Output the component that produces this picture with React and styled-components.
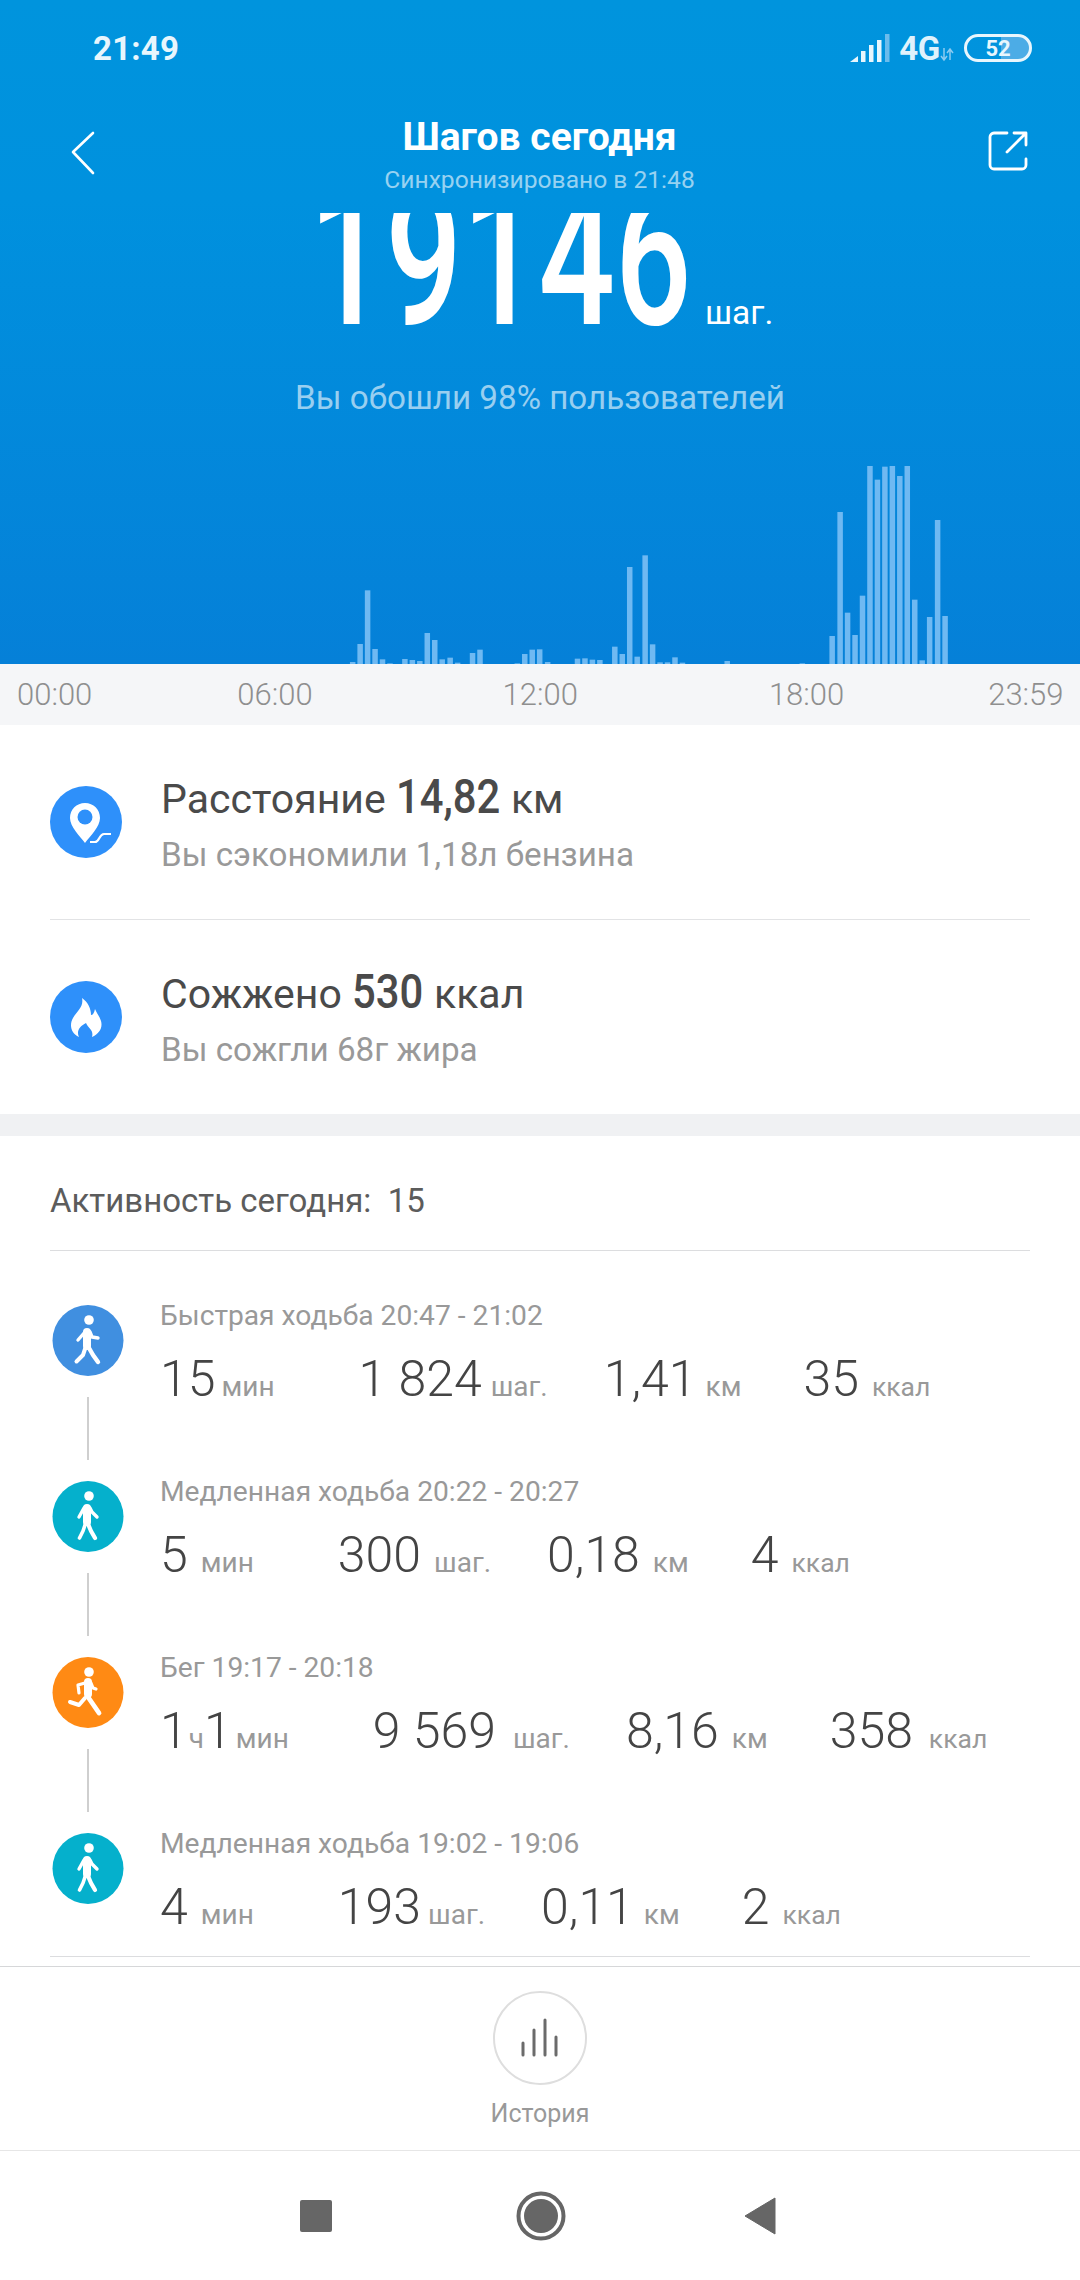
import React from "react";
import styled, { createGlobalStyle } from "styled-components";

const Global = createGlobalStyle`
  html, body { margin: 0; padding: 0; background: #fff; }
  body { font-family: Roboto, "Noto Sans", sans-serif; }
  * { box-sizing: border-box; }
`;

const Page = styled.div`
  width: 1080px; height: 2280px; overflow: hidden; background: #fff;
  display: flex; flex-direction: column;
`;
const Hero = styled.header`
  height: 664px; display: flex; flex-direction: column; color: #fff;
  background: linear-gradient(180deg, #0094dd 0%, #0091de 30%, #0580d8 100%);
`;
const StatusBar = styled.div`
  height: 96px; display: flex; align-items: center; justify-content: space-between;
  padding: 0 48px 0 93px;
`;
const Clock = styled.span`
  font-size: 33px; font-weight: 700; color: #e8f6fd; letter-spacing: .2px;
`;
const StatusRight = styled.div`
  display: flex; align-items: center;
`;
const NetLabel = styled.span`
  font-size: 33px; font-weight: 700; color: #dff2fc; margin-left: 7px; letter-spacing: -.3px;
`;
const ArrowsIcon = styled.svg`
  display: block; margin-top: 14px;
`;
const Battery = styled.div`
  width: 68px; height: 28px; margin-left: 10px; border: 3px solid #e8f6fd; border-radius: 14px;
  display: flex; align-items: center; justify-content: center; overflow: hidden;
  font-size: 22px; font-weight: 700; color: #e8f6fd;
  background: linear-gradient(90deg, transparent 0 55%, #4cace6 55% 100%);
`;
const NavBar = styled.div`
  height: 117px; display: flex; justify-content: space-between; padding: 35px 52px 0 70px;
`;
const TitleBlock = styled.div`
  display: flex; flex-direction: column; align-items: center; margin: -17px 5px 0 0;
`;
const Title = styled.div`
  font-size: 39px; line-height: 46px; font-weight: 700; white-space: nowrap;
`;
const Subtitle = styled.div`
  font-size: 24.6px; line-height: 30px; color: rgba(255,255,255,.6); white-space: nowrap; margin-top: 5px;
`;
const NumberClip = styled.div`
  height: 130px; overflow: hidden; display: flex; padding-left: 309px; align-items: baseline;
`;
const BigDigits = styled.div`
  width: 374px; flex: none; font-size: 195px; font-weight: 500; line-height: 89px; white-space: nowrap;
  transform-origin: 0 0; transform: scaleX(.69);
`;
const BigUnit = styled.div`
  font-size: 33.5px; line-height: 40px; margin-left: 22px;
`;
const Beat = styled.div`
  text-align: center; font-size: 33.2px; line-height: 40px; color: rgba(255,255,255,.6); margin-top: 35px;
`;
const ChartSvg = styled.svg`
  display: block; margin-top: auto; width: 1080px; height: 198px; flex: none;
`;
const TimeAxis = styled.div`
  height: 61px; background: #f5f6f8; display: flex; align-items: center;
  padding-left: 17px; font-size: 31px; font-weight: 300; color: #8f8f8f;
  span:nth-child(2) { margin-left: 145px; }
  span:nth-child(3) { margin-left: 190px; }
  span:nth-child(4) { margin-left: 191px; }
  span:nth-child(5) { margin-left: 144px; }
`;
const Summary = styled.section`
  padding: 0 50px;
`;
const SummaryRow = styled.div`
  height: ${p => p.$h}px; display: flex; align-items: center;
  border-bottom: ${p => (p.$line ? "1px solid #e2e3e5" : "none")};
`;
const RoundIcon = styled.svg`
  width: 72px; height: 72px; flex: none; display: block;
`;
const SummaryText = styled.div`
  margin-left: 39px; margin-top: 2px;
`;
const SummaryTitle = styled.div`
  font-size: 41px; line-height: 50px; color: #4a4a4a; white-space: nowrap;
`;
const SummaryValue = styled.span`
  display: inline-block; font-size: 48px; font-weight: 480; transform-origin: 0 50%;
  transform: scaleX(.87); margin-right: ${p => p.$trim}px;
`;
const SummarySub = styled.div`
  font-size: 33.2px; line-height: 40px; color: #999; margin-top: 11px; white-space: nowrap;
`;
const Band = styled.div`
  height: 22px; background: #f0f1f3;
`;
const ActivityHead = styled.div`
  margin: 0 50px; height: 115px; border-bottom: 1px solid #dcdddf; display: flex; align-items: center;
  font-size: 33px; color: #5c5c5c; white-space: pre; padding-top: 15px;
`;
const List = styled.div`
  padding-top: 54px; margin: 0 50px; height: 706px; border-bottom: 1px solid #dcdddf;
`;
const ActivityRow = styled.div`
  height: 176px; display: flex; padding-left: 2px;
`;
const IconCol = styled.div`
  width: 72px; flex: none; display: flex; flex-direction: column; align-items: center;
`;
const Connector = styled.div`
  width: 2px; height: 63px; background: #cfcfcf; margin-top: 20px;
`;
const ActivityBody = styled.div`
  margin-left: 36px; min-width: 0;
`;
const ActivityTitle = styled.div`
  font-size: 28.2px; line-height: 32px; color: #999; white-space: nowrap; margin-top: -5px;
`;
const Stats = styled.div`
  display: flex; align-items: baseline; margin-top: 16px; white-space: nowrap;
`;
const Stat = styled.div`
  display: flex; align-items: baseline;
  &:nth-child(2) { margin-left: 84px; }
  &:nth-child(3) { margin-left: 56px; }
  &:nth-child(4) { margin-left: 62px; }
`;
const Num = styled.span`
  font-size: 50px; line-height: 62px; font-weight: 300; color: #444; margin-right: ${p => p.$pull || 0}px;
`;
const Unit = styled.span`
  font-size: ${p => (p.$small ? 26.5 : 28)}px; color: #999; margin-left: 13px;
`;
const BottomBar = styled.div`
  margin-top: 9px; height: 185px; border-top: 1px solid #d6d7d9; border-bottom: 1px solid #e6e6e6;
  display: flex; flex-direction: column; align-items: center; padding-top: 24px;
`;
const HistoryBtn = styled.div`
  width: 94px; height: 94px; border: 2px solid #dedede; border-radius: 50%;
  display: flex; align-items: center; justify-content: center;
`;
const HistoryLabel = styled.div`
  font-size: 25px; line-height: 30px; color: #999; margin-top: 14px;
`;
const SysNav = styled.nav`
  flex: 1; display: flex; align-items: center; padding-left: 299px;
`;
const NavIcon = styled.svg`
  display: block; flex: none; margin-right: ${p => p.$mr}px;
`;

const bars = [[106,666],[121,612],[136,451],[151,627],[166,658],[181,670],[211,657],[226,660],[241,663],[256,579],[271,600],[286,658],[302,653],[317,668],[347,639],[362,629],[437,670],[452,642],[467,629],[482,628],[498,666],[558,656],[573,655],[588,659],[603,660],[633,620],[648,642],[663,381],[678,650],[694,346],[709,613],[724,667],[739,667],[754,652],[769,668],[859,663],[1010,670],[1070,588],[1086,216],[1101,518],[1116,585],[1131,467],[1146,78],[1161,119],[1176,80],[1191,78],[1206,108],[1221,78],[1236,479],[1251,661],[1266,531],[1282,240],[1297,528]];

const BLUE = "#2e90fa";
const Pin = () => (
  <RoundIcon viewBox="0 0 72 72">
    <circle cx="36" cy="36" r="36" fill={BLUE} />
    <path d="M35 17C26.5 17 20 23.5 20 32C20 41 30 50 35 57C40 50 50 41 50 32C50 23.5 43.5 17 35 17Z" fill="#fff" />
    <circle cx="35" cy="31" r="7.5" fill={BLUE} />
    <path d="M40 56h5c4.500 0 4-8 9-8h7" fill="none" stroke={BLUE} strokeWidth="5" />
    <path d="M40 56h5c4.500 0 4-8 9-8h7" fill="none" stroke="#fff" strokeWidth="2.200" />
  </RoundIcon>
);
const Flame = () => (
  <RoundIcon viewBox="0 0 72 72">
    <circle cx="36" cy="36" r="36" fill={BLUE} />
    <path d="M32 17C34 26 27 30 23 37C19 44 21 52 29 56C26 50 30 45 36 42C38 47 44 49 42 56C49 53 53 47 51 40C49 34 47 33 45 28C44 32 43 34 41 34C41 28 38 21 32 17Z" fill="#fff" />
  </RoundIcon>
);
const Figure = ({ color, kind }) => (
  <RoundIcon viewBox="0 0 72 72">
    <circle cx="36" cy="35.500" r="35.500" fill={color} />
    <g fill="none" stroke="#fff" strokeLinecap="round" strokeLinejoin="round">
      <circle cx="37" cy="15" r="4.800" fill="#fff" stroke="none" />
      {kind === "fast" && <>
        <path d="M35 27V41" strokeWidth="8" />
        <path d="M33 27L26 35M38 27L40 32L46 33" strokeWidth="3.400" />
        <path d="M33 44L31 50L24.500 56.500" strokeWidth="4" />
        <path d="M37 43L41 50L46 57" strokeWidth="4.400" />
      </>}
      {kind === "slow" && <>
        <path d="M35 27V41" strokeWidth="8" />
        <path d="M32 27L27 36M38 27L40 31L45 36" strokeWidth="3.400" />
        <path d="M33 44L31 50L27.500 57" strokeWidth="3.600" />
        <path d="M36 43L39 50L43 57" strokeWidth="4.200" />
      </>}
      {kind === "run" && <>
        <path d="M36 25V37" strokeWidth="8" />
        <path d="M33 26L26 28L27 36M39 26L41 31L44 32" strokeWidth="3.200" />
        <path d="M36 40L47 56" strokeWidth="4.800" />
        <path d="M33 41L27 48L18 45" strokeWidth="4" />
      </>}
    </g>
  </RoundIcon>
);

const rows = [
  { t: "Быстрая ходьба 20:47 - 21:02", c: "#408fe0", k: "fast", s: [[["15", "мин", -7]], [["1 824", "шаг.", -4]], [["1,41", "км", -4]], [["35", "ккал"]]] },
  { t: "Медленная ходьба 20:22 - 20:27", c: "#05b0cc", k: "slow", s: [[["5", "мин"]], [["300", "шаг."]], [["0,18", "км"]], [["4", "ккал"]]] },
  { t: "Бег 19:17 - 20:18", c: "#ff8a14", k: "run", s: [[["1", "ч", -12], ["1", "мин", -9]], [["9 569", "шаг.", 4]], [["8,16", "км"]], [["358", "ккал", 3]]] },
  { t: "Медленная ходьба 19:02 - 19:06", c: "#05b0cc", k: "slow", s: [[["4", "мин"]], [["193", "шаг.", -6]], [["0,11", "км", -3]], [["2", "ккал"]]] },
];

export default function App() {
  return (
    <Page>
      <Global />
      <Hero>
        <StatusBar>
          <Clock>21:49</Clock>
          <StatusRight>
            <svg width="42" height="30" viewBox="0 0 42 30">
              <path d="M0 29L8 23V29Z" fill="#e8f6fd" />
              <rect x="11" y="18" width="4.500" height="11" fill="#e8f6fd" />
              <rect x="19" y="12" width="4.500" height="17" fill="#e8f6fd" />
              <rect x="27" y="7" width="4.500" height="22" fill="#e8f6fd" />
              <rect x="35" y="1" width="4.500" height="28" fill="#6cbcec" />
            </svg>
            <NetLabel>4G</NetLabel>
            <ArrowsIcon width="14" height="14" viewBox="0 0 14 14">
              <path d="M4 0V12M1 8L4 12L7 8M10 12V1M7 5L10 1L13 5" fill="none" stroke="#8ccbf0" strokeWidth="1.500" />
            </ArrowsIcon>
            <Battery>52</Battery>
          </StatusRight>
        </StatusBar>
        <NavBar>
          <svg width="26" height="44" viewBox="0 0 26 44">
            <path d="M23 2L3 21L23 42" fill="none" stroke="#fff" strokeWidth="2.600" strokeLinecap="round" strokeLinejoin="round" />
          </svg>
          <TitleBlock>
            <Title>Шагов сегодня</Title>
            <Subtitle>Синхронизировано в 21:48</Subtitle>
          </TitleBlock>
          <svg width="40" height="40" viewBox="0 0 40 40">
            <path d="M19 2H6a4 4 0 0 0-4 4V34a4 4 0 0 0 4 4H34a4 4 0 0 0 4-4V28M19 21L37 3M26 2H38V14" fill="none" stroke="#fff" strokeWidth="2.800" strokeLinecap="round" strokeLinejoin="round" />
          </svg>
        </NavBar>
        <NumberClip>
          <BigDigits>19146</BigDigits>
          <BigUnit>шаг.</BigUnit>
        </NumberClip>
        <Beat>Вы обошли 98% пользователей</Beat>
        <ChartSvg viewBox="0 0 1080 198">
          {bars.map(([x, y]) => (
            <rect key={x} x={300 + x * 0.4974 - 2.8} y={(y - 78) / 3} width="5.500" height={(672 - y) / 3} fill="#6fb9f2" />
          ))}
        </ChartSvg>
      </Hero>
      <TimeAxis>
        <span>00:00</span><span>06:00</span><span>12:00</span><span>18:00</span><span>23:59</span>
      </TimeAxis>
      <Summary>
        <SummaryRow $h={195} $line>
          <Pin />
          <SummaryText>
            <SummaryTitle>Расстояние <SummaryValue $trim={-15}>14,82</SummaryValue> км</SummaryTitle>
            <SummarySub>Вы сэкономили 1,18л бензина</SummarySub>
          </SummaryText>
        </SummaryRow>
        <SummaryRow $h={194}>
          <Flame />
          <SummaryText>
            <SummaryTitle>Сожжено <SummaryValue $trim={-10}>530</SummaryValue> ккал</SummaryTitle>
            <SummarySub>Вы сожгли 68г жира</SummarySub>
          </SummaryText>
        </SummaryRow>
      </Summary>
      <Band />
      <ActivityHead>{"Активность сегодня:  15"}</ActivityHead>
      <List>
        {rows.map((r, i) => (
          <ActivityRow key={i}>
            <IconCol>
              <Figure color={r.c} kind={r.k} />
              {i < rows.length - 1 && <Connector />}
            </IconCol>
            <ActivityBody>
              <ActivityTitle>{r.t}</ActivityTitle>
              <Stats>
                {r.s.map((st, j) => (
                  <Stat key={j}>
                    {st.map(([n, u, pull], m) => (
                      <React.Fragment key={m}>
                        <Num $pull={pull}>{n}</Num>
                        <Unit $small={u === "ккал"}>{u}</Unit>
                      </React.Fragment>
                    ))}
                  </Stat>
                ))}
              </Stats>
            </ActivityBody>
          </ActivityRow>
        ))}
      </List>
      <BottomBar>
        <HistoryBtn>
          <svg width="40" height="40" viewBox="0 0 40 40">
            <path d="M3 37V25M14 37V12M25 37V2M36 37V19" stroke="#6b6b6b" strokeWidth="3" strokeLinecap="round" />
          </svg>
        </HistoryBtn>
        <HistoryLabel>История</HistoryLabel>
      </BottomBar>
      <SysNav>
        <NavIcon width="34" height="34" viewBox="0 0 34 34" $mr={183}>
          <rect x="1" y="1" width="32" height="32" rx="2" fill="#666" />
        </NavIcon>
        <NavIcon width="50" height="50" viewBox="0 0 50 50" $mr={178}>
          <circle cx="25" cy="25" r="22.500" fill="none" stroke="#666" strokeWidth="4" />
          <circle cx="25" cy="25" r="17" fill="#666" />
        </NavIcon>
        <NavIcon width="32" height="38" viewBox="0 0 32 38">
          <path d="M31 1V37L1 19Z" fill="#666" stroke="#666" strokeWidth="1" strokeLinejoin="round" />
        </NavIcon>
      </SysNav>
    </Page>
  );
}
